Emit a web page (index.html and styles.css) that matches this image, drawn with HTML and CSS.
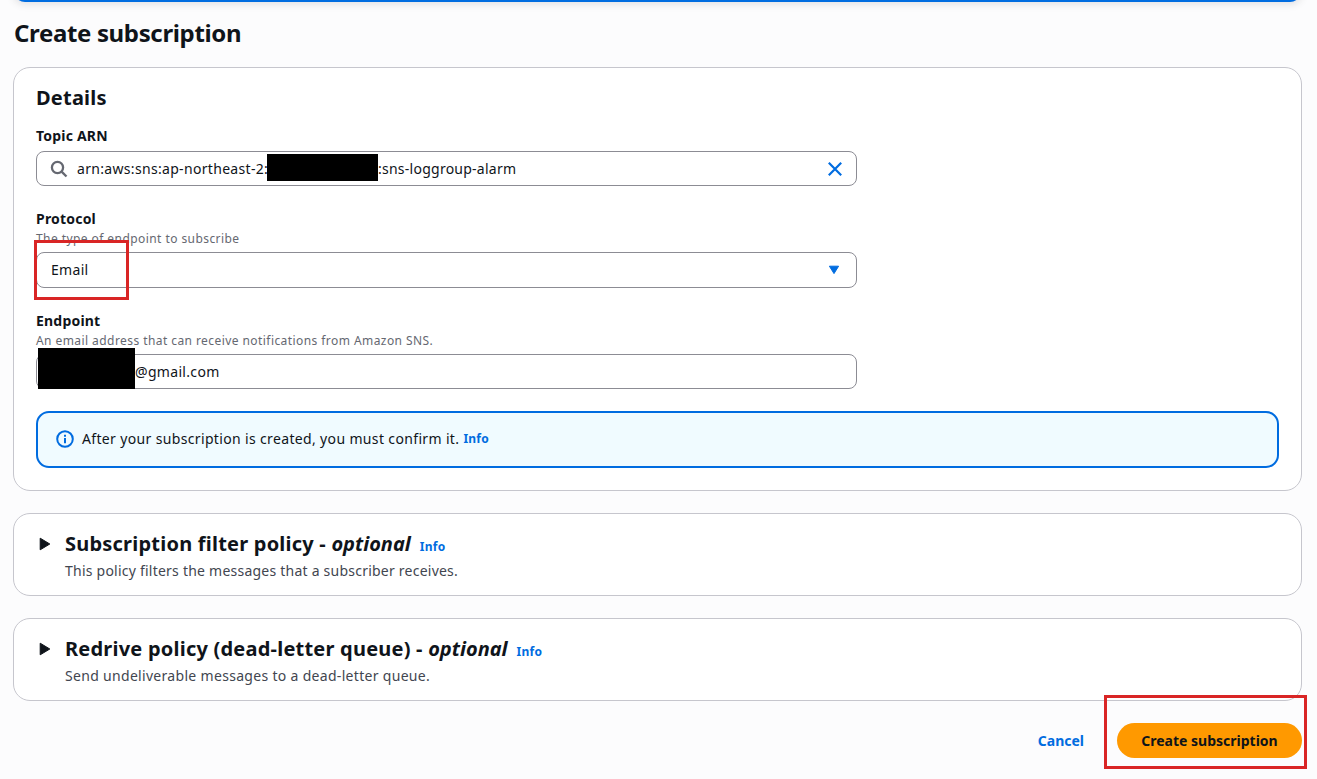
FILE: index.html
```html
<!DOCTYPE html>
<html lang="en">
<head>
<meta charset="utf-8">
<title>Create subscription</title>
<link rel="stylesheet" href="styles.css">
</head>
<body>
<main class="page">
  <div class="banner"></div>
  <h1 class="title">Create subscription</h1>

  <section class="card details">
    <h2 class="heading">Details</h2>

    <div class="field">
      <div class="label">Topic ARN</div>
      <div class="control search">
        <svg class="icon-search" viewBox="0 0 18 18"><circle cx="7.5" cy="7.5" r="5.6"/><path d="M11.6 11.6 16.5 16.5"/></svg>
        <span class="arn-prefix">arn:aws:sns:ap-northeast-2:</span>
        <span class="redact redact-arn"></span>
        <span class="arn-suffix">:sns-loggroup-alarm</span>
        <svg class="icon-close" viewBox="0 0 16 16"><path d="M1.8 1.8 14.2 14.2M14.2 1.8 1.8 14.2"/></svg>
      </div>
    </div>

    <div class="field field-protocol">
      <div class="label">Protocol</div>
      <div class="hint">The type of endpoint to subscribe</div>
      <div class="control select">
        <span>Email</span>
        <svg class="icon-caret" viewBox="0 0 12 10"><path d="M1.4 1.2h9.2L6 8.6z"/></svg>
        <span class="mark mark-email"></span>
      </div>
    </div>

    <div class="field field-endpoint">
      <div class="label">Endpoint</div>
      <div class="hint">An email address that can receive notifications from Amazon SNS.</div>
      <div class="control input">
        <span class="redact redact-email"></span>
        <span>@gmail.com</span>
      </div>
    </div>

    <div class="alert">
      <svg class="icon-info" viewBox="0 0 18 18"><circle cx="9" cy="9" r="7.8"/><path d="M9 8v5.2M9 4.8v2"/></svg>
      <span class="alert-text">After your subscription is created, you must confirm it.</span>
      <a class="info">Info</a>
    </div>
  </section>

  <section class="card expandable">
    <svg class="icon-expand" viewBox="0 0 12 14"><path d="M1.2 1.2v11.6L10.8 7z"/></svg>
    <div>
      <h2 class="heading">Subscription filter policy - <em>optional</em><a class="info">Info</a></h2>
      <p class="description">This policy filters the messages that a subscriber receives.</p>
    </div>
  </section>

  <section class="card expandable">
    <svg class="icon-expand" viewBox="0 0 12 14"><path d="M1.2 1.2v11.6L10.8 7z"/></svg>
    <div>
      <h2 class="heading">Redrive policy (dead-letter queue) - <em>optional</em><a class="info">Info</a></h2>
      <p class="description description-wide">Send undeliverable messages to a dead-letter queue.</p>
    </div>
  </section>

  <footer class="actions">
    <a class="cancel">Cancel</a>
    <button class="primary">Create subscription</button>
    <span class="mark mark-create"></span>
  </footer>
</main>
</body>
</html>
```
FILE: styles.css
```css
* { box-sizing: border-box; }
body {
  margin: 0;
  height: 779px;
  overflow: hidden;
  background: #fcfcfd;
  color: #0f141a;
  font: 14px/20px "Noto Sans", "Open Sans", sans-serif;
}
h1, h2, p { margin: 0; }
.page { padding: 0 15px 0 13px; }
.banner {
  height: 22px;
  margin: -20px 0 0 1px;
  width: 1287px;
  border-radius: 16px;
  background: #006ce0;
  box-shadow: 0 1px 8px 1px rgba(0, 7, 22, .12);
}
.title { margin: 16px 0 19px 1px; font-size: 24px; line-height: 30px; font-weight: 700; letter-spacing: -.35px; }
.card { border: 1px solid #c6c6cd; border-radius: 17px; background: #fff; }
.details { height: 424px; padding: 17px 22px 0; }
.heading { font-size: 20px; line-height: 26px; font-weight: 700; white-space: pre; letter-spacing: .22px; }
.heading em { letter-spacing: 0; }
.field { width: 821px; margin-top: 15px; }
.label { font-weight: 700; line-height: 20px; letter-spacing: .2px; }
.hint { position: relative; height: 19px; font-size: 12px; line-height: 20px; letter-spacing: .43px; color: #656871; }
.control {
  position: relative;
  display: flex;
  align-items: center;
  height: 35px;
  border: 1px solid #8c8c94;
  border-radius: 8px;
  letter-spacing: .32px;
}
.search { margin-top: 5px; padding-left: 13px; }
.icon-search { width: 18px; height: 18px; margin-right: 9px; fill: none; stroke: #656871; stroke-width: 2.3; }
.arn-prefix { width: 190px; white-space: nowrap; }
.arn-suffix { letter-spacing: .25px; }
.redact { position: relative; background: #000; }
.redact-arn { width: 111px; height: 27px; margin-top: -2px; }
.icon-close { width: 16px; height: 16px; margin-left: auto; margin-right: 13px; fill: none; stroke: #006ce0; stroke-width: 2.2; }
.field-protocol { margin-top: 23px; }
.select { height: 36px; margin-top: 4px; padding-left: 14px; }
.icon-caret { width: 12px; height: 10px; margin-left: auto; margin-right: 16px; fill: #006ce0; stroke: #006ce0; stroke-linejoin: round; }
.mark { position: absolute; border: 3px solid #d92525; }
.mark-email { left: -3px; top: -13px; width: 95px; height: 60px; }
.field-endpoint { margin-top: 23px; }
.input { margin-top: 4px; }
.redact-email { width: 97px; height: 41px; margin-left: 1px; margin-top: -6px; flex: none; }
.alert {
  display: flex;
  align-items: center;
  height: 57px;
  margin-top: 22px;
  padding: 0 0 1px 18px;
  border: 2px solid #006ce0;
  border-radius: 13px;
  background: #f0fbff;
}
.alert-text { letter-spacing: .35px; }
.icon-info { width: 18px; height: 18px; margin-right: 8px; fill: none; stroke: #006ce0; stroke-width: 2; }
.info { color: #006ce0; font-size: 12px; font-weight: 700; letter-spacing: .25px; }
.alert .info { margin-left: 4px; }
.expandable { display: flex; height: 83px; margin-top: 22px; padding: 17px 25px; }
.icon-expand { width: 12px; height: 14px; margin-top: 6px; margin-right: 14px; fill: #0f141a; stroke: #0f141a; stroke-linejoin: round; }
.heading .info { margin-left: 9px; }
.description { margin-top: 1px; color: #424650; letter-spacing: .23px; }
.description-wide { letter-spacing: .31px; }
.actions { position: relative; display: flex; align-items: center; justify-content: flex-end; margin-top: 22px; height: 35px; }
.cancel { color: #006ce0; font-weight: 700; margin-right: 33px; }
.primary { width: 185px; height: 35px; border: 0; border-radius: 18px; background: #ff9900; color: #0f141a; font: inherit; font-weight: 700; padding: 0; }
.mark-create { right: -5px; top: -28px; width: 203px; height: 74px; }
```
